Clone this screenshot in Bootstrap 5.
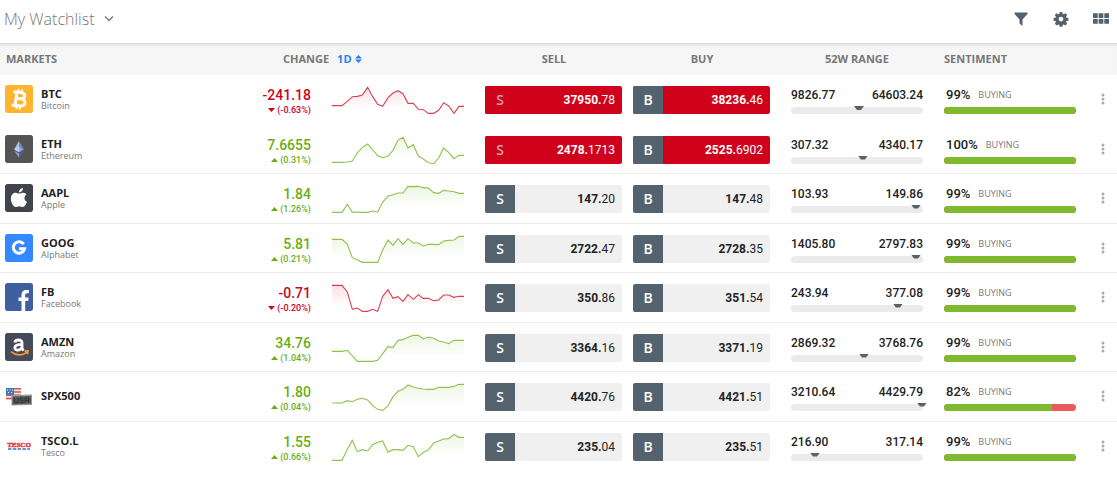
<!DOCTYPE html>
<html lang="en">
<head>
<meta charset="utf-8">
<meta name="viewport" content="width=device-width, initial-scale=1">
<title>My Watchlist</title>
<link href="https://cdn.jsdelivr.net/npm/bootstrap@5.3.0/dist/css/bootstrap.min.css" rel="stylesheet">
<style>
  :root { --slate: #54626d; --up: #6aae16; --down: #d0021b; --line: #ececec; }
  body { font-family: "Open Sans", sans-serif; color: #222; background: #fff; }
  .num { font-family: Roboto, sans-serif; font-weight: 500; }

  .topbar { height: 43px; padding: 0 8px 5px 4px; }
  .list-title { font-size: 16px; font-weight: 300; color: #777; line-height: 24px; }
  .tool { width: 16px; height: 16px; color: var(--slate); }

  .watch { table-layout: fixed; min-width: 980px; }
  .watch thead { background: #f6f6f6; box-shadow: inset 0 4px 3px -2px #dcdcdc; }
  .watch th { height: 32px; padding: 0; font-size: 11px; line-height: 16px; font-weight: 700; color: #777; }
  .watch th.h-markets { padding-left: 6px; }
  .watch th.h-change { padding-left: 81px; }
  .watch th.h-range { padding-left: 5px; }
  .watch th.h-mood { padding-left: 11px; }
  .watch tbody tr { height: 50px; border-bottom: 1px solid var(--line); }
  .watch tbody tr:first-child, .watch tbody tr:nth-child(even) { height: 49px; }
  .watch tbody tr:first-child, .watch tbody tr:last-child { border-bottom-color: transparent; }
  .watch td { padding: 10px 0 0; vertical-align: top; }
  .watch .c-market { padding-left: 5px; }
  .watch .c-trade { padding: 11px 6px 0 5px; }
  .watch .c-spark { padding: 11px 0 0 10px; }
  .watch .c-range { padding: 12px 10px 0 15px; }
  .watch .c-mood { padding: 12px 11px 0; }
  .watch .c-more { padding: 18px 0 0 14px; }
  .period { color: #2b7ff5; font-size: 11px; line-height: 16px; gap: 3px; }

  .logo { width: 28px; height: 28px; border-radius: 2px; }
  .ticker { font-size: 11px; line-height: 13px; font-weight: 700; }
  .company { font-size: 9px; line-height: 11px; color: #777; }

  .change { padding-right: 11px; }
  .change .amount { font-size: 14px; line-height: 20px; }
  .change .pct { font-size: 9px; line-height: 10px; gap: 2px; }
  .up { color: var(--up); }
  .down { color: var(--down); }

  .quote { height: 28px; border-radius: 2px; background: #f0f0f0; color: #222; }
  .quote .side { width: 30px; height: 28px; background: var(--slate); color: #fff; font: 600 14px/28px "Open Sans", sans-serif; }
  .quote .price { font-size: 12px; line-height: 28px; padding-right: 7px; font-weight: 400; }
  .quote .price b { font-weight: 700; }
  .quote.hot { background: var(--down); color: #fff; }
  .quote.hit .side { background: var(--down); color: #d0a0a5; }

  .figures { font-size: 12px; line-height: 16px; height: 20px; }
  .share { font-size: 13px; padding-left: 2px; }
  .track { height: 7px; border-radius: 4px; background: #ebebeb; }
  .marker { top: -1px; width: 10px; height: 4px; background: var(--slate); clip-path: polygon(0 0, 100% 0, 70% 100%, 30% 100%); }
  .mood { height: 7px; border-radius: 4px; background: #ea5a5a; }
  .mood .progress-bar { background: #7fb92e; }
  .buying { font-size: 9px; color: #777; }
</style>
</head>
<body>
<header class="topbar d-flex align-items-center justify-content-between">
  <button class="btn p-0 border-0 d-flex align-items-center gap-2 list-title" type="button">My Watchlist
    <svg width="12" height="8" viewBox="0 0 12 8" fill="none" stroke="#777" stroke-width="1.3"><path d="M2 1.500 6 5.500 10 1.500"/></svg>
  </button>
  <div class="d-flex align-items-center gap-4">
    <button class="btn p-0 border-0 tool d-flex" type="button" aria-label="Filter"><svg width="16" height="16" viewBox="0 0 16 16" fill="currentColor"><path d="M1.500 1.500h13v1.500L9.500 8.500V15L6.500 12.500v-4L1.500 3z"/></svg></button>
    <button class="btn p-0 border-0 tool d-flex" type="button" aria-label="Settings"><svg width="16" height="16" viewBox="0 0 16 16" fill="currentColor"><path fill-rule="evenodd" d="M6.700 1h2.600l.4 1.900 1 .4 1.700-1.100 1.800 1.800-1.100 1.700.4 1 1.900.4v2.600l-1.900.4-.4 1 1.100 1.700-1.800 1.800-1.700-1.100-1 .4-.4 1.900H6.700l-.4-1.900-1-.4-1.700 1.100-1.800-1.800 1.100-1.700-.4-1L.6 9.700V7.100l1.900-.4.4-1L1.800 4l1.800-1.800 1.700 1.100 1-.4zM8 5.700a2.400 2.400 0 1 0 0 4.800 2.400 2.400 0 0 0 0-4.800z"/></svg></button>
    <button class="btn p-0 border-0 tool d-flex" type="button" aria-label="Grid view"><svg width="17" height="16" viewBox="0 0 17 16" fill="currentColor"><path d="M0 2h5v5H0zM6 2h5v5H6zM12 2h5v5h-5zM0 8h5v5H0zM6 8h5v5H6zM12 8h5v5h-5z"/></svg></button>
  </div>
</header>

<main>
  <table class="watch w-100">
    <colgroup><col><col style="width:120px"><col style="width:158px"><col style="width:148px"><col style="width:148px"><col style="width:157px"><col style="width:154px"><col style="width:30px"></colgroup>
    <thead>
      <tr>
        <th scope="col" class="h-markets">MARKETS</th>
        <th scope="col" colspan="2" class="h-change"><div class="d-flex align-items-center gap-2">CHANGE
          <button type="button" class="btn p-0 border-0 fw-bold period d-flex align-items-center">1D <svg width="7" height="8" viewBox="0 0 7 8" fill="currentColor"><path d="M0 3.400 3.500 0 7 3.400zM0 4.600h7L3.500 8z"/></svg></button></div></th>
        <th scope="col" class="text-center">SELL</th>
        <th scope="col" class="text-center">BUY</th>
        <th scope="col" class="text-center h-range">52W RANGE</th>
        <th scope="col" class="h-mood">SENTIMENT</th>
        <td></td>
      </tr>
    </thead>
    <tbody id="rows"></tbody>
  </table>
</main>

<script>
const svg = inner => `<svg class="logo flex-shrink-0" viewBox="0 0 28 28" aria-hidden="true">${inner}</svg>`;
const tile = (color, inner) => svg(`<rect width="28" height="28" rx="2" fill="${color}"/>${inner}`);
const logos = {
  BTC: tile('#ffb52e', '<g fill="none" stroke="#fff" stroke-width="2.900" transform="rotate(7 14 14)"><path d="M7.500 7.500h8c5 0 5 6 0 6h-4h4.500c5.800 0 5.800 7.300 0 7.300H7.500M11 7.500v13.300"/><path stroke-width="1.900" d="M12.500 4v3.500M16 4v3.500M12.500 21v3.500M16 21v3.500"/></g>'),
  ETH: tile('#555454', '<path fill="#a9c3ec" d="M14 6v11.500L9 14.600z"/><path fill="#6e8cc4" d="M14 6v11.500l5-2.900z"/><path fill="#88a5d8" d="M14 18.500v4l-5-6.800z"/><path fill="#4c669c" d="M14 18.500v4l5-6.800z"/><path fill="#d6e1f5" d="m14 12 4 2.500-4 2.500-4-2.500z" opacity=".4"/>'),
  AAPL: tile('#42444c', '<path fill="#fff" d="M14.200 9.600c1.200 0 2.300-1 4-.9 1.500.1 2.600.7 3.300 1.700-3 1.900-2.500 6.100.5 7.300-.8 2.400-2.300 5.300-4.300 5.400-1.300 0-1.800-.8-3.400-.8s-2.100.8-3.400.8C8 23.100 5.700 17.900 5.900 14.300c.2-3.500 2.400-5.500 4.700-5.500 1.500 0 2.600.8 3.600.8zM14 8.400c-.1-2.300 1.700-4.200 3.900-4.400.3 2.300-1.700 4.400-3.900 4.400z"/>'),
  GOOG: tile('#3388ff', '<path fill="none" stroke="#fff" stroke-width="3" d="M18.700 10.200A5.700 5.700 0 1 0 19.600 14.700H14"/>'),
  FB: tile('#3f5f9e', '<path fill="#fff" d="M16.500 28V18h-3v-3.600h3v-2.600c0-3.300 1.900-4.900 4.800-4.900 1.100 0 2 .1 2.500.2v3.200h-1.700c-1.500 0-1.900.8-1.900 1.900v2.200h3.500l-.5 3.600h-3v10z"/>'),
  AMZN: tile('#464b5c', '<path fill="none" stroke="#fff" stroke-width="2.800" d="M9.800 9.500c.5-3.200 7.200-3.500 7.200.2v5c0 1.200.6 1.900 1.700 2.700M17 11.300c-4.500 0-7.200.8-7.200 3.500 0 3.500 6.200 2.800 7.200-.8"/><path fill="none" stroke="#f39a35" stroke-width="1.800" d="M6 18.600c5 4.300 11.500 4.300 16 .5M19.500 18.200l3.500-.2-.7 3.200"/>'),
  SPX500: svg('<path fill="#e9e4e5" d="M1 6h15v12H1z"/><path stroke="#d9534f" stroke-width="1.500" d="M1 6.800h15M1 10h15M1 13.200h15M1 16.600h6"/><path fill="#4179b8" d="M1 6h8v7H1z"/><path fill="#fff" d="M2 7.500h1v1H2zM4.500 7.500h1v1h-1zM7 7.500h1v1H7zM3 10h1v1H3zM6 10h1v1H6z"/><path fill="#999" d="m6.500 13 20.500-.5V23l-20.500.5z"/><path fill="#555" d="m7.500 14.500 18.500-.5v7.500L7.500 22.500z"/><path fill="none" stroke="#333" d="M9.500 16v4.500H13V16M18 16h-3v2.200h3v2.300h-3M20 20.500V16h3.500v4.500M20 18.500h3"/>'),
  'TSCO.L': svg('<text x="14" y="15" text-anchor="middle" font-family="Liberation Serif, serif" font-weight="700" font-size="7" fill="#dc3341" stroke="#dc3341" stroke-width=".4">TESCO</text><path stroke="#3f6fb5" stroke-width="1.500" stroke-dasharray="3.500 1.300" d="M3 17h22"/>')
};

// chart values are thirds of a pixel from the top of the sparkline box
const markets = [
  { t:'BTC', n:'Bitcoin', c:'-241.18', p:'-0.63', s:'37950.78', b:'38236.46', lo:'9826.77', hi:'64603.24', at:51.5, mood:99, hot:1, y:[59,59,59,46,32,31,27,4,32,55,61,35,21,14,23,52,52,70,71,82,82,73,50,60,82,61,61] },
  { t:'ETH', n:'Ethereum', c:'7.6655', p:'0.31', s:'2478.1713', b:'2525.6902', lo:'307.32', hi:'4340.17', at:54.5, mood:100, hot:1, y:[79,79,79,78,75,51,34,24,42,59,65,60,43,13,4,36,26,60,69,80,83,66,36,49,68,58,58] },
  { t:'AAPL', n:'Apple', c:'1.84', p:'1.26', s:'147.20', b:'147.48', lo:'103.93', hi:'149.86', at:94.7, mood:99, y:[82,82,82,58,82,81,82,82,78,81,52,33,29,24,24,4,5,4,8,9,23,25,16,18,20,25,25] },
  { t:'GOOG', n:'Alphabet', c:'5.81', p:'0.21', s:'2722.47', b:'2728.35', lo:'1405.80', hi:'2797.83', at:94.7, mood:99, y:[13,13,13,27,68,74,82,82,82,82,45,15,31,11,28,11,24,24,33,28,28,29,18,16,15,4,4] },
  { t:'FB', n:'Facebook', c:'-0.71', p:'-0.20', s:'350.86', b:'351.54', lo:'243.94', hi:'377.08', at:81, mood:99, y:[4,4,4,24,76,72,82,82,76,82,37,17,43,38,52,32,46,32,43,43,50,48,33,33,40,37,37] },
  { t:'AMZN', n:'Amazon', c:'34.76', p:'1.04', s:'3364.16', b:'3371.19', lo:'2869.32', hi:'3768.76', at:55.3, mood:99, y:[52,52,52,49,66,82,82,82,82,79,59,38,40,19,17,10,4,4,15,9,13,21,24,29,19,19,19] },
  { t:'SPX500', n:'', c:'1.80', p:'0.04', s:'4420.76', b:'4421.51', lo:'3210.64', hi:'4429.79', at:99.2, mood:82, y:[60,60,60,53,56,49,46,51,68,79,82,69,41,25,19,6,12,16,18,19,19,13,13,13,10,4,4] },
  { t:'TSCO.L', n:'Tesco', c:'1.55', p:'0.66', s:'235.04', b:'235.51', lo:'216.90', hi:'317.14', at:18.2, mood:99, y:[82,82,82,49,22,56,50,54,35,28,24,58,50,50,52,37,41,71,58,51,30,24,18,17,4,13,13] }
];

const quote = (side, value, cls) => {
  const [whole, dec] = value.split('.');
  return `<button type="button" class="btn p-0 border-0 w-100 d-flex justify-content-between overflow-hidden quote ${cls}">
    <span class="side text-center">${side}</span><span class="price num"><b>${whole}.</b>${dec}</span></button>`;
};

const spark = (m, i) => {
  const color = m.c < '0' ? '#d0021b' : '#6aae16';
  const pts = m.y.map((y, k) => `${Math.round(k * 396 / 26)},${y}`).join(' ');
  return `<svg class="d-block" width="132" height="28" viewBox="0 0 396 84" aria-hidden="true">
    <linearGradient id="fade${i}" x1="0" y1="0" x2="0" y2="1"><stop stop-color="${color}" stop-opacity=".12"/><stop offset=".8" stop-color="${color}" stop-opacity="0"/></linearGradient>
    <polygon points="0,84 ${pts} 396,84" fill="url(#fade${i})"/>
    <polyline points="${pts}" fill="none" stroke="${color}" stroke-opacity=".75" stroke-width="3.300"/></svg>`;
};

document.getElementById('rows').innerHTML = markets.map((m, i) => {
  const dir = m.c < '0' ? 'down' : 'up';
  const arrow = dir === 'up' ? 'M0 4 3.500 0 7 4z' : 'M0 0h7L3.500 4z';
  return `<tr>
    <td class="c-market"><div class="d-flex gap-2">${logos[m.t]}
      <div class="d-flex flex-column justify-content-center"><span class="ticker">${m.t}</span>${m.n && `<span class="company">${m.n}</span>`}</div></div></td>
    <td class="text-end ${dir}"><div class="change num"><div class="amount">${m.c}</div>
      <div class="pct d-flex justify-content-end align-items-center"><svg width="7" height="4" viewBox="0 0 7 4" fill="currentColor"><path d="${arrow}"/></svg>(${m.p}%)</div></div></td>
    <td class="c-spark">${spark(m, i)}</td>
    <td class="c-trade">${quote('S', m.s, m.hot ? 'hot hit' : '')}</td>
    <td class="c-trade">${quote('B', m.b, m.hot ? 'hot' : '')}</td>
    <td class="c-range"><div class="d-flex justify-content-between figures num"><span>${m.lo}</span><span>${m.hi}</span></div>
      <div class="track position-relative"><div class="marker position-absolute translate-middle-x" style="left:${m.at}%"></div></div></td>
    <td class="c-mood"><div class="d-flex figures gap-2"><span class="num share">${m.mood}%</span><span class="buying">BUYING</span></div>
      <div class="progress mood"><div class="progress-bar" style="width:${m.mood}%"></div></div></td>
    <td class="c-more"><button type="button" class="btn p-0 border-0 d-block" aria-label="More actions for ${m.t}"><svg class="d-block" width="4" height="12" viewBox="0 0 4 12" fill="#aaa"><circle cx="2" cy="2" r="1.500"/><circle cx="2" cy="6" r="1.500"/><circle cx="2" cy="10" r="1.500"/></svg></button></td>
  </tr>`;
}).join('');
</script>
<script src="https://cdn.jsdelivr.net/npm/bootstrap@5.3.0/dist/js/bootstrap.bundle.min.js"></script>
</body>
</html>
